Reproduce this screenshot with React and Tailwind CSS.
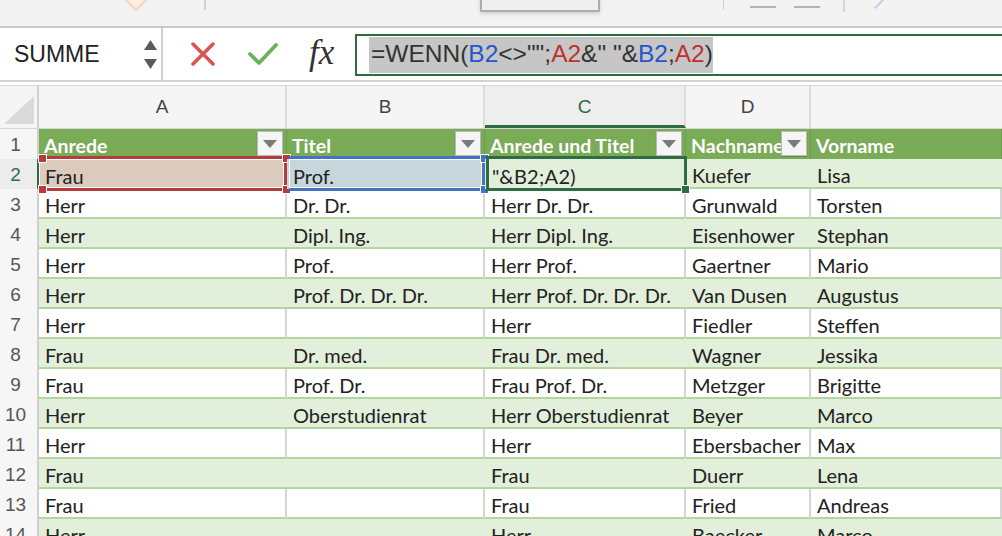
import React from 'react'

const cellFont = { fontFamily: '"Lato", "Noto Sans", sans-serif' }
const uiFont = { fontFamily: '"Liberation Sans", Arial, sans-serif' }

const widths = ['w-[248px]', 'w-[198px]', 'w-[201px]', 'w-[125px]', 'flex-1']

const headers = ['Anrede', 'Titel', 'Anrede und Titel', 'Nachname', 'Vorname']

const rows = [
  ['Herr', 'Dr. Dr.', 'Herr Dr. Dr.', 'Grunwald', 'Torsten'],
  ['Herr', 'Dipl. Ing.', 'Herr Dipl. Ing.', 'Eisenhower', 'Stephan'],
  ['Herr', 'Prof.', 'Herr Prof.', 'Gaertner', 'Mario'],
  ['Herr', 'Prof. Dr. Dr. Dr.', 'Herr Prof. Dr. Dr. Dr.', 'Van Dusen', 'Augustus'],
  ['Herr', '', 'Herr', 'Fiedler', 'Steffen'],
  ['Frau', 'Dr. med.', 'Frau Dr. med.', 'Wagner', 'Jessika'],
  ['Frau', 'Prof. Dr.', 'Frau Prof. Dr.', 'Metzger', 'Brigitte'],
  ['Herr', 'Oberstudienrat', 'Herr Oberstudienrat', 'Beyer', 'Marco'],
  ['Herr', '', 'Herr', 'Ebersbacher', 'Max'],
  ['Frau', '', 'Frau', 'Duerr', 'Lena'],
  ['Frau', '', 'Frau', 'Fried', 'Andreas'],
  ['Herr', '', 'Herr', 'Baecker', 'Marco'],
]

function RowNum({ n, active }) {
  return (
    <div
      style={uiFont}
      className={`flex w-[39px] shrink-0 items-center justify-center border-r-2 pr-[6px] pt-[2px] text-[19px] ${
        active ? 'border-[#2f6b45] bg-[#ececec] text-[#2f6b45]' : 'border-[#cfcfcf] bg-[#f6f6f6] text-[#555]'
      }`}
    >
      {n}
    </div>
  )
}

function FilterButton() {
  return (
    <div className="absolute right-[3px] top-[2px] flex h-[25px] w-[26px] items-center justify-center border border-[#b9b9b9] bg-[#f5f5f5] shadow-[0_1px_1px_rgba(0,0,0,0.15)]">
      <svg width="14" height="8" viewBox="0 0 14 8">
        <path d="M0 0 H14 L7 8 Z" fill="#7b7b7b" />
      </svg>
    </div>
  )
}

function Handle({ className }) {
  return <div className={`absolute h-[9px] w-[9px] border border-white ${className}`} />
}

export default function App() {
  return (
    <div className="h-[536px] w-[1002px] overflow-hidden bg-white">
      {/* toolbar strip */}
      <div className="relative h-[28px] border-b-2 border-[#c9c9c9] bg-[#f3f3f3]">
        <div className="absolute left-[128px] top-[-8px] h-[16px] w-[16px] rotate-45 border-2 border-[#f4d6bb] bg-[#fbeee2]" />
        <div className="absolute left-[204px] top-0 h-[10px] w-[2px] bg-[#cfcfcf]" />
        <div className="absolute left-[480px] top-[-4px] h-[16px] w-[120px] border-2 border-[#adadad] bg-[#efefef] shadow-[0_2px_4px_rgba(0,0,0,0.15)]" />
        <div className="absolute left-[723px] top-0 h-[10px] w-[1px] bg-[#cfcfcf]" />
        <div className="absolute left-[750px] top-[6px] h-[2px] w-[26px] bg-[#b3b3b3]" />
        <div className="absolute left-[794px] top-[6px] h-[2px] w-[26px] bg-[#b3b3b3]" />
        <div className="absolute left-[843px] top-0 h-[12px] w-[2px] bg-[#d6d6d6]" />
        <div className="absolute left-[878px] top-[-2px] h-[12px] w-[2px] rotate-45 bg-[#b7d2ee]" />
      </div>

      {/* formula bar */}
      <div className="flex h-[54px] border-b-2 border-[#d3d3d3] bg-white">
        <div className="flex w-[163px] shrink-0 items-center justify-between border-r-2 border-[#d0d0d0] pl-[14px] pr-[4px]">
          <span style={uiFont} className="text-[23px] text-[#222]">SUMME</span>
          <div className="flex flex-col gap-[9px]">
            <svg width="13" height="10" viewBox="0 0 13 10">
              <path d="M6.5 0 L13 10 H0 Z" fill="#5a5a5a" />
            </svg>
            <svg width="13" height="10" viewBox="0 0 13 10">
              <path d="M0 0 H13 L6.5 10 Z" fill="#5a5a5a" />
            </svg>
          </div>
        </div>
        <div className="flex w-[192px] shrink-0 items-center pl-[28px]">
          <svg width="24" height="24" viewBox="0 0 24 24">
            <path d="M2 2 L22 22 M22 2 L2 22" stroke="#d9534f" strokeWidth="3.5" strokeLinecap="round" />
          </svg>
          <svg width="30" height="24" viewBox="0 0 30 24" className="ml-[33px]">
            <path d="M2 12 L11 21 L28 3" stroke="#6cb357" strokeWidth="3.8" fill="none" strokeLinecap="round" strokeLinejoin="round" />
          </svg>
          <span
            className="ml-[31px] pb-[2px] text-[35px] italic text-[#333]"
            style={{ fontFamily: '"Liberation Serif", "DejaVu Serif", serif' }}
          >
            fx
          </span>
        </div>
        <div className="flex flex-1 items-center pt-[1px]">
          <div className="flex h-[42px] w-full items-stretch border-2 border-r-0 border-[#2d6a3d] py-[1px] pl-[12px]">
            <span style={uiFont} className="flex items-center bg-[#c6c6c6] pl-[2px] text-[24.5px] text-[#333]">
              =WENN(<span className="text-[#2356c9]">B2</span>&lt;&gt;"";<span className="text-[#c0312b]">A2</span>&amp;"&nbsp;"&amp;
              <span className="text-[#2356c9]">B2</span>;<span className="text-[#c0312b]">A2</span>)
            </span>
          </div>
        </div>
      </div>

      {/* column headers */}
      <div className="mt-[3px] flex h-[44px] border-y border-[#d6d6d6] bg-[#f5f5f5]" style={uiFont}>
        <div className="relative w-[39px] shrink-0 border-r-2 border-[#d0d0d0]">
          <svg width="30" height="28" viewBox="0 0 30 28" className="absolute bottom-[4px] left-[4px]">
            <path d="M30 0 V28 H0 Z" fill="#dadada" />
          </svg>
        </div>
        <div className="flex w-[248px] items-center justify-center border-r-2 border-[#dcdcdc] text-[19px] text-[#444]">A</div>
        <div className="flex w-[198px] items-center justify-center border-r-2 border-[#dcdcdc] text-[19px] text-[#444]">B</div>
        <div className="flex w-[201px] items-center justify-center border-b-[3px] border-r-2 border-[#2e6b45] border-r-[#dcdcdc] bg-[#eeeeee] pt-[3px] text-[19px] text-[#2e6b45]">
          C
        </div>
        <div className="flex w-[125px] items-center justify-center border-r-2 border-[#dcdcdc] text-[19px] text-[#444]">D</div>
        <div className="flex-1" />
      </div>

      {/* row 1: table header */}
      <div className="flex h-[30px]" style={cellFont}>
        <RowNum n={1} />
        {headers.map((h, i) => (
          <div
            key={h}
            className={`relative flex ${widths[i]} shrink-0 items-center overflow-hidden whitespace-nowrap border-r border-[#6e9c4d] bg-[#7aab57] pl-[5px] pt-[3px] text-[19.5px] font-bold text-white`}
          >
            {h}
            {i < 4 && <FilterButton />}
          </div>
        ))}
      </div>

      {/* row 2: editing row */}
      <div className="relative z-10 flex h-[30px]" style={cellFont}>
        <RowNum n={2} active />
        <div className="relative flex w-[248px] shrink-0 items-center bg-[#dccbbd] pl-[6px] pt-[3px] text-[20px] text-[#222]">
          Frau
          <div className="absolute inset-x-0 -bottom-[2px] -top-[3px] border-y-[3px] border-r-[3px] border-[#b43c3c] shadow-[inset_0_0_0_1px_white]" />
          <Handle className="-left-[1px] -top-[5px] bg-[#b43c3c]" />
          <Handle className="-bottom-[5px] -left-[1px] bg-[#b43c3c]" />
          <Handle className="-right-[4px] -top-[5px] bg-[#b43c3c]" />
          <Handle className="-bottom-[5px] -right-[4px] bg-[#b43c3c]" />
        </div>
        <div className="relative flex w-[198px] shrink-0 items-center bg-[#c6d6da] pl-[6px] pt-[3px] text-[20px] text-[#222]">
          Prof.
          <div className="absolute -bottom-[2px] -top-[3px] left-[2px] right-0 border-y-[3px] border-r-[3px] border-[#4472c4] shadow-[inset_0_0_0_1px_white]" />
          <Handle className="-right-[4px] -top-[5px] bg-[#4472c4]" />
          <Handle className="-bottom-[5px] -right-[4px] bg-[#4472c4]" />
        </div>
        <div className="relative flex w-[201px] shrink-0 items-center bg-[#e2efda] pl-[7px] pt-[3px] text-[20px] tracking-[0.3px] text-[#222]">
          "&amp;B2;A2)
          <div className="absolute -bottom-[2px] -top-[3px] left-[1px] -right-[1px] border-[3px] border-[#2f6b45]" />
          <Handle className="-bottom-[5px] -right-[4px] bg-[#2f6b45]" />
        </div>
        <div className="flex w-[125px] shrink-0 items-center border-b-2 border-[#b5d59e] bg-[#e2efda] pl-[6px] pt-[3px] text-[20px] text-[#222]">
          Kuefer
        </div>
        <div className="flex flex-1 items-center border-b-2 border-[#b5d59e] bg-[#e2efda] pl-[6px] pt-[3px] text-[20px] text-[#222]">
          Lisa
        </div>
      </div>

      {rows.map((r, ri) => {
        const green = ri % 2 === 1
        return (
          <div key={ri} className="flex h-[30px]" style={cellFont}>
            <RowNum n={ri + 3} />
            {r.map((c, ci) => (
              <div
                key={ci}
                className={`flex ${widths[ci]} shrink-0 items-center whitespace-nowrap border-b-2 border-b-[#b5d59e] pl-[6px] pt-[3px] text-[20px] text-[#222] ${
                  green ? 'bg-[#e2efda]' : 'border-r-2 border-r-[#d6d6d6] bg-white'
                }`}
              >
                {c}
              </div>
            ))}
          </div>
        )
      })}
    </div>
  )
}
